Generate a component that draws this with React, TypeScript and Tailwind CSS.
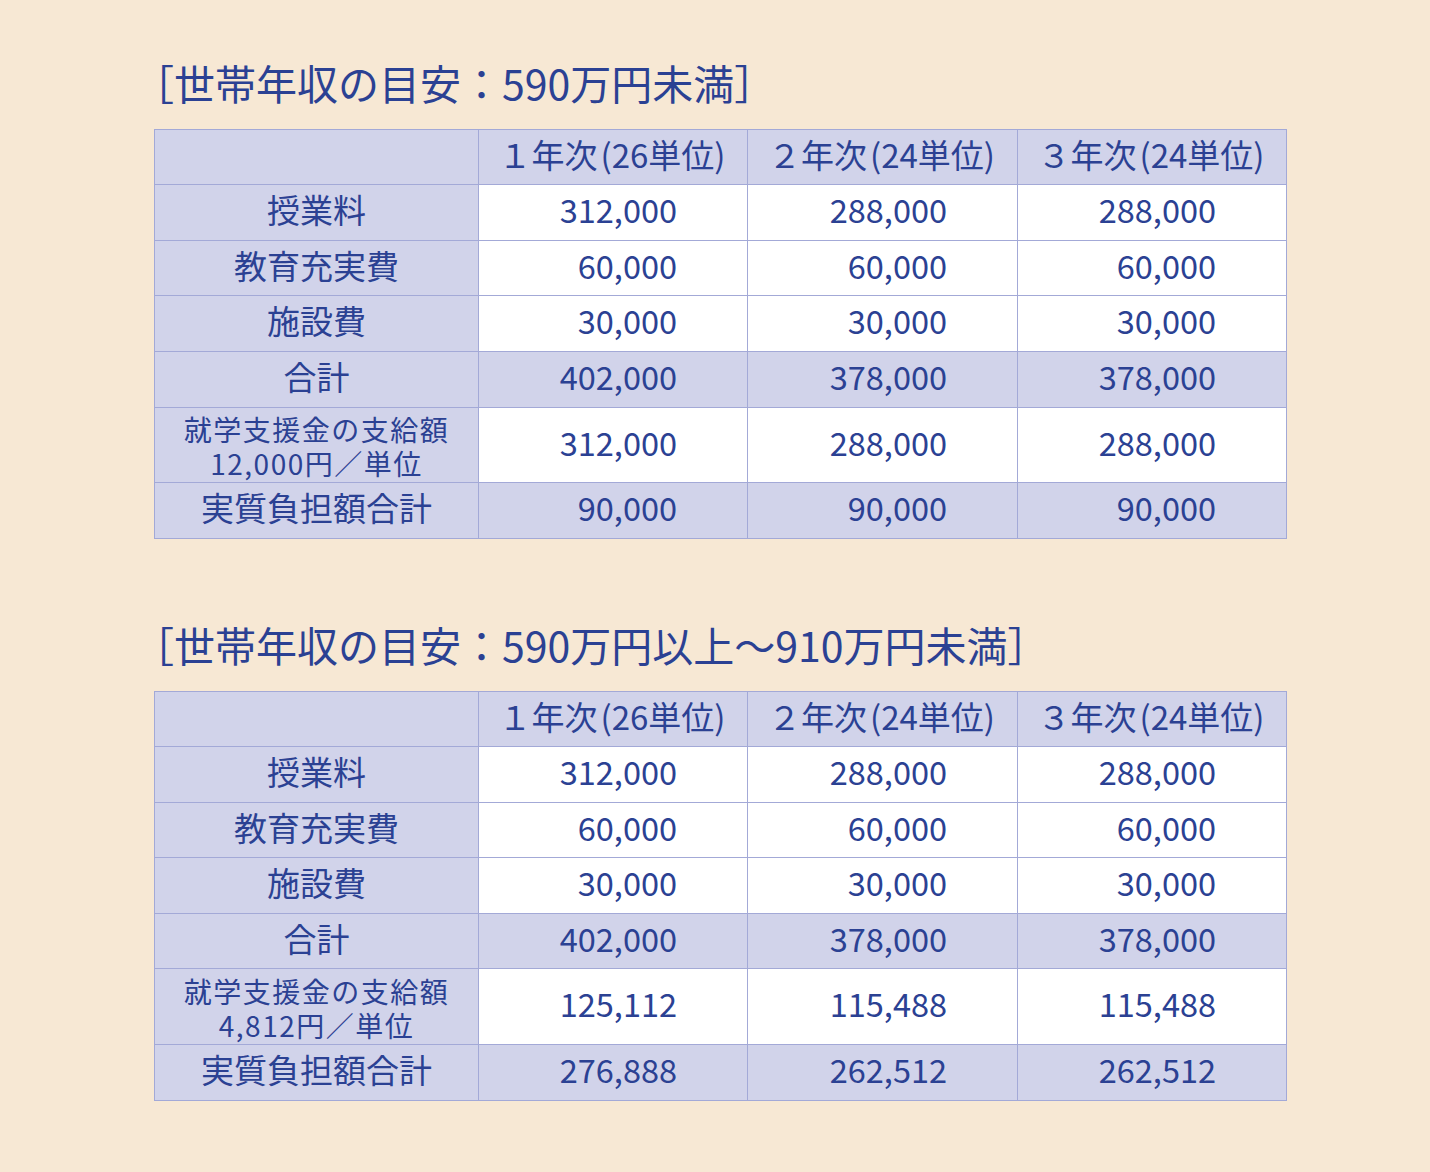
import React from 'react';

type Row = { label: React.ReactNode; values: string[]; shaded: boolean; h: string; tall?: boolean };

const header = [
  ['１年次', '(26単位)'],
  ['２年次', '(24単位)'],
  ['３年次', '(24単位)'],
];

const FeeTable = ({ rows }: { rows: Row[] }) => {
  return (
    <div className="grid w-[1133px] grid-cols-[323px_268px_269px_268px] gap-px border border-[#a3a9d7] bg-[#a3a9d7]">
      {/* ヘッダー */}
      <div className="h-[54px] bg-[#d1d3ea]" />
      {header.map(([year, unit]) => (
        <div
          key={year}
          className="flex h-[54px] items-center justify-center bg-[#d1d3ea] pb-[7px] text-[33px] leading-[40px]"
        >
          {year}
          <span className="ml-[3px] mr-[2px]">{unit}</span>
        </div>
      ))}
      {rows.map((row, i) => (
        <React.Fragment key={i}>
          <div
            className={`flex items-center justify-center bg-[#d1d3ea] text-center ${row.h} ${
              row.tall ? 'pt-[2px] text-[28px] leading-[34px] tracking-[1.5px]' : 'pb-[7px] text-[33px] leading-[40px]'
            }`}
          >
            {row.label}
          </div>
          {row.values.map((v, j) => (
            <div
              key={j}
              className={`flex items-center justify-end pb-[7px] pr-[70px] text-[32.5px] leading-[40px] ${
                row.shaded ? 'bg-[#d1d3ea]' : 'bg-white'
              }`}
            >
              {v}
            </div>
          ))}
        </React.Fragment>
      ))}
    </div>
  );
};

const Title = ({ children }: { children: React.ReactNode }) => (
  <h2 className="ml-[-21px] text-[41px] leading-[48px]">{children}</h2>
);

const App = () => {
  const first: Row[] = [
    { label: '授業料', values: ['312,000', '288,000', '288,000'], shaded: false, h: 'h-[55px]' },
    { label: '教育充実費', values: ['60,000', '60,000', '60,000'], shaded: false, h: 'h-[54px]' },
    { label: '施設費', values: ['30,000', '30,000', '30,000'], shaded: false, h: 'h-[55px]' },
    { label: '合計', values: ['402,000', '378,000', '378,000'], shaded: true, h: 'h-[55px]' },
    {
      label: (
        <span>
          就学支援金の支給額
          <br />
          12,000円／単位
        </span>
      ),
      values: ['312,000', '288,000', '288,000'],
      shaded: false,
      h: 'h-[74px]',
      tall: true,
    },
    { label: '実質負担額合計', values: ['90,000', '90,000', '90,000'], shaded: true, h: 'h-[55px]' },
  ];

  const second: Row[] = [
    { label: '授業料', values: ['312,000', '288,000', '288,000'], shaded: false, h: 'h-[55px]' },
    { label: '教育充実費', values: ['60,000', '60,000', '60,000'], shaded: false, h: 'h-[54px]' },
    { label: '施設費', values: ['30,000', '30,000', '30,000'], shaded: false, h: 'h-[55px]' },
    { label: '合計', values: ['402,000', '378,000', '378,000'], shaded: true, h: 'h-[54px]' },
    {
      label: (
        <span>
          就学支援金の支給額
          <br />
          4,812円／単位
        </span>
      ),
      values: ['125,112', '115,488', '115,488'],
      shaded: false,
      h: 'h-[75px]',
      tall: true,
    },
    { label: '実質負担額合計', values: ['276,888', '262,512', '262,512'], shaded: true, h: 'h-[55px]' },
  ];

  return (
    <div className="min-h-[1172px] bg-[#f7e8d4] pl-[154px] pt-[58px] font-['Noto_Sans_CJK_JP',sans-serif] text-[#2b4193]">
      {/* 590万円未満 */}
      <Title>［世帯年収の目安：590万円未満］</Title>
      <div className="mt-[23px]">
        <FeeTable rows={first} />
      </div>

      {/* 590万円以上〜910万円未満 */}
      <div className="mt-[81px]">
        <Title>［世帯年収の目安：590万円以上～910万円未満］</Title>
      </div>
      <div className="mt-[23px]">
        <FeeTable rows={second} />
      </div>
    </div>
  );
};

export default App;
